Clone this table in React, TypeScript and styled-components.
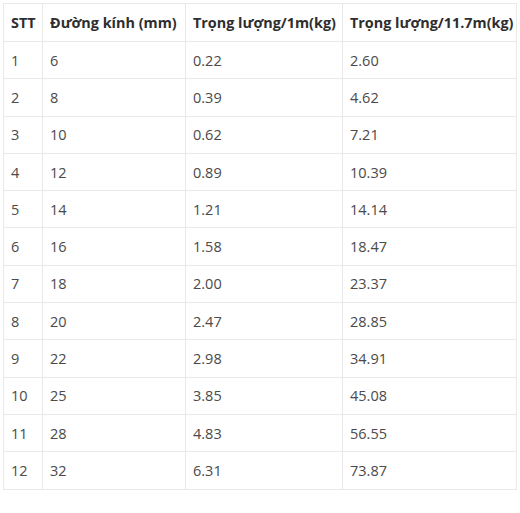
import styled, { createGlobalStyle } from "styled-components";

const GlobalStyle = createGlobalStyle`
  html, body {
    margin: 0;
    padding: 0;
    background: #fff;
  }
  body {
    font-family: "Open Sans", "Liberation Sans", sans-serif;
  }
`;

const Page = styled.div`
  padding: 3px 4px 0 3px;
`;

const Table = styled.table`
  width: 513px;
  border-collapse: collapse;
  table-layout: fixed;
  font-size: 14px;
  color: #4a4a4a;
`;

const HeadCell = styled.th<{ $w: number }>`
  box-sizing: border-box;
  width: ${(p) => p.$w}px;
  height: 38px;
  padding: 0 0 1px 7px;
  border: 1px solid #e9e9e9;
  text-align: left;
  font-weight: 700;
  font-size: 14.4px;
  color: #2e2e2e;
  white-space: nowrap;
`;

const Cell = styled.td`
  box-sizing: border-box;
  height: 37.3px;
  padding: 0 0 0 7px;
  border: 1px solid #e9e9e9;
  text-align: left;
  font-weight: 400;
  font-size: 14.5px;
`;

const rows: [number, number, string, string][] = [
  [1, 6, "0.22", "2.60"],
  [2, 8, "0.39", "4.62"],
  [3, 10, "0.62", "7.21"],
  [4, 12, "0.89", "10.39"],
  [5, 14, "1.21", "14.14"],
  [6, 16, "1.58", "18.47"],
  [7, 18, "2.00", "23.37"],
  [8, 20, "2.47", "28.85"],
  [9, 22, "2.98", "34.91"],
  [10, 25, "3.85", "45.08"],
  [11, 28, "4.83", "56.55"],
  [12, 32, "6.31", "73.87"],
];

export default function App() {
  return (
    <Page>
      <GlobalStyle />
      <Table>
        <thead>
          <tr>
            <HeadCell $w={39}>STT</HeadCell>
            <HeadCell $w={143}>Đường kính (mm)</HeadCell>
            <HeadCell $w={157}>Trọng lượng/1m(kg)</HeadCell>
            <HeadCell $w={174}>Trọng lượng/11.7m(kg)</HeadCell>
          </tr>
        </thead>
        <tbody>
          {rows.map(([n, d, w1, w2]) => (
            <tr key={n}>
              <Cell>{n}</Cell>
              <Cell>{d}</Cell>
              <Cell>{w1}</Cell>
              <Cell>{w2}</Cell>
            </tr>
          ))}
        </tbody>
      </Table>
    </Page>
  );
}
